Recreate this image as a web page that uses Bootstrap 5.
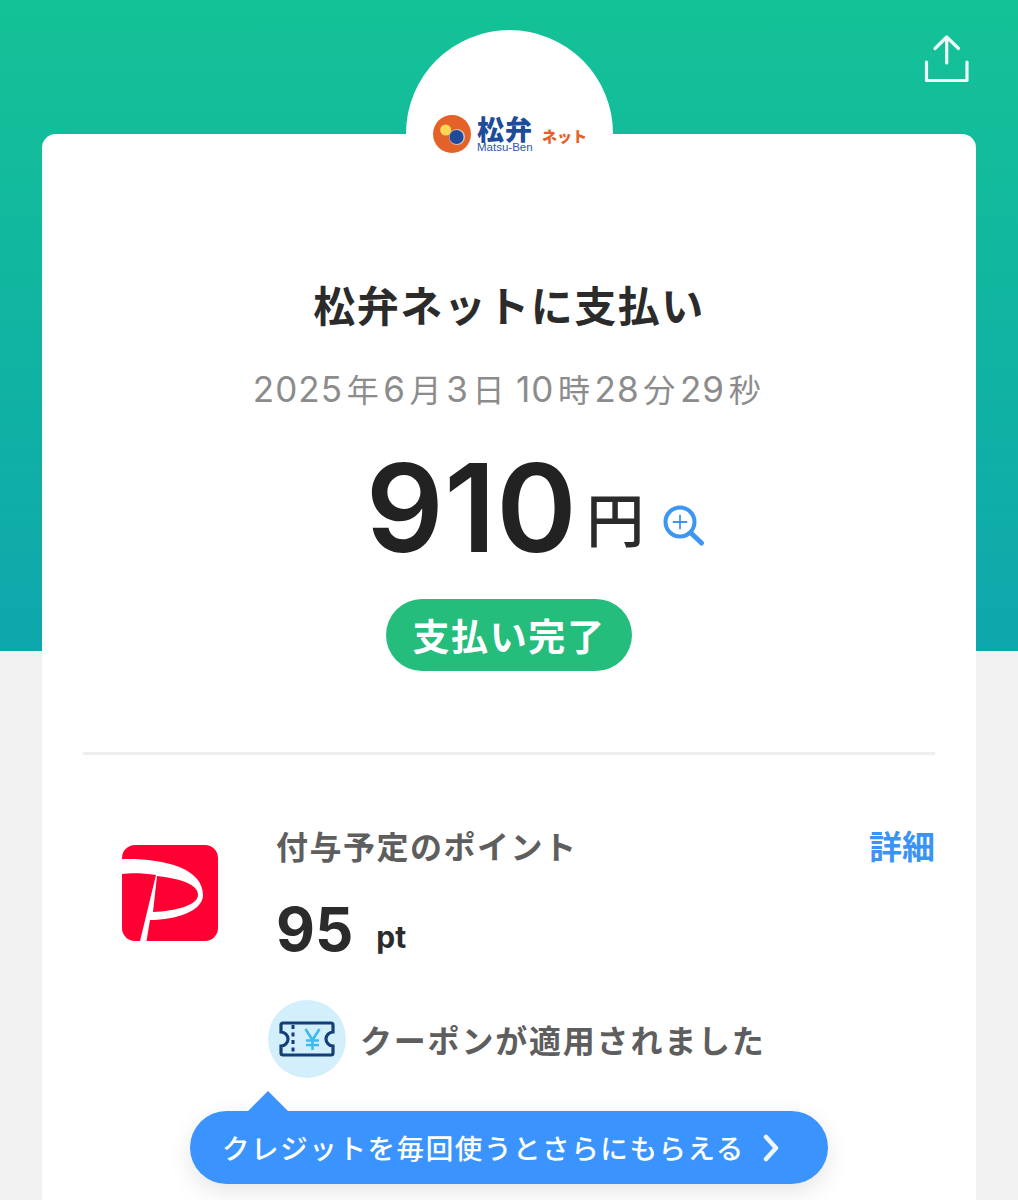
<!DOCTYPE html>
<html lang="ja">
<head>
  <meta charset="UTF-8">
  <meta name="viewport" content="width=device-width, initial-scale=1.0">
  <title>松弁ネットに支払い</title>
  <link href="https://cdn.jsdelivr.net/npm/bootstrap@5.3.0/dist/css/bootstrap.min.css" rel="stylesheet">
  <style>
    html, body { height: 1200px; overflow: hidden; }
    body {
      font-family: Inter, "Noto Sans CJK JP", sans-serif;
      color: #222;
      background: #f2f2f2;
    }
    .pay-screen {
      height: 1200px;
      padding: 134px 42px 0;
      background: linear-gradient(#14c296, #0ea7ad) top / 100% 651px no-repeat;
    }
    .share-btn { top: 33px; right: 47px; width: 48px; height: 52px; }
    .receipt {
      height: 1066px;
      background: #fff;
      border-radius: 14px 14px 0 0;
      padding: 0 41px;
    }
    .logo-dome {
      top: -104px;
      left: 364px;
      width: 207px;
      height: 207px;
      border-radius: 50%;
      background: #fff;
      z-index: 0;
    }
    .logo-wrap { top: -19px; left: 391px; z-index: 1; line-height: 1; }
    .logo-kanji { font: 900 27px/27px "Noto Sans CJK JP", sans-serif; color: #1d4c9b; letter-spacing: 1px; }
    .logo-latin { font: 400 11.500px/11px "Liberation Sans", sans-serif; color: #2a58a5; }
    .logo-brand { margin-left: 6px; }
    .logo-net { font: 800 15px/15px "Noto Sans CJK JP", sans-serif; color: #e4622a; margin: 3px 0 0 9px; }
    .pay-title {
      padding-top: 141px;
      font: 700 42px/58px "Noto Sans CJK JP", sans-serif;
      letter-spacing: 1.5px;
      color: #2b2b2b;
      margin: 0;
    }
    .pay-date {
      margin-top: 30px;
      font-size: 35px;
      line-height: 50px;
      letter-spacing: 1.1px;
      word-spacing: -4px;
      color: #8c8c8c;
      white-space: nowrap;
    }
    .pay-date span { font-family: "Noto Sans CJK JP", sans-serif; font-size: 32px; margin: 0 3.500px; }
    .amount-row { margin-top: 30px; height: 135px; padding-left: 53px; }
    .amount-num { font: 600 122px/127px Inter, "Liberation Sans", sans-serif; letter-spacing: 0.500px; color: #222; }
    .amount-yen { font: 500 58px/58px "Noto Sans CJK JP", sans-serif; margin: 44px 0 0 9px; color: #2b2b2b; }
    .zoom-icon { width: 42px; height: 42px; margin: 61px 0 0 19px; }
    .status-pill {
      width: 246px;
      height: 72px;
      margin-top: 20px;
      border-radius: 36px;
      background: #24bd7c;
      color: #fff;
      font: 700 37px/72px "Noto Sans CJK JP", sans-serif;
      letter-spacing: 1.6px;
    }
    .rule-line { height: 3px; background: #eeeeee; margin: 81px 0 0; }
    .point-row { padding-top: 66px; }
    .paypay-mark { width: 98px; height: 98px; margin: 24px 0 0 38px; flex: none; }
    .point-body { margin-left: 57px; padding-top: 1px; }
    .point-label { font: 700 32px/46px "Noto Sans CJK JP", sans-serif; color: #5e5e5e; letter-spacing: 1.5px; }
    .detail-link { font: 700 33px/46px "Noto Sans CJK JP", sans-serif; color: #3b94f5; text-decoration: none; }
    .point-value { font: 700 60px/70px Inter, sans-serif; color: #2b2b2b; margin-top: 26px; }
    .point-unit { font: 700 30px/70px Inter, sans-serif; margin-left: 23px; padding-top: 8px; }
    .coupon-row { margin: 28px 0 0 -8px; }
    .coupon-badge { width: 78px; height: 78px; border-radius: 50%; background: #d3effb; flex: none; }
    .coupon-text { font: 700 32px/46px "Noto Sans CJK JP", sans-serif; color: #5e5e5e; margin-left: 14px; letter-spacing: 1.800px; }
    .credit-tip {
      left: 190px;
      top: 1111px;
      width: 638px;
      height: 73px;
      border-radius: 37px;
      background: #3b94fd;
      color: #fff;
      font: 500 27.500px/73px "Noto Sans CJK JP", sans-serif;
      letter-spacing: 1.600px;
      padding: 0 0 0 32px;
      text-decoration: none;
      box-shadow: 0 8px 24px rgba(0, 0, 0, .1);
    }
    .credit-tip::before {
      content: "";
      position: absolute;
      left: 57px;
      top: -20px;
      border-left: 21px solid transparent;
      border-right: 21px solid transparent;
      border-bottom: 21px solid #3b94fd;
    }
  </style>
</head>
<body>
  <div class="pay-screen position-relative">
    <!-- share -->
    <a class="share-btn position-absolute" href="#" aria-label="共有">
      <svg viewBox="0 0 48 52" width="48" height="52" fill="none" stroke="#eefbf8" stroke-width="3.200" stroke-linecap="round" stroke-linejoin="round">
        <path d="M3.500 29V47.500H44V29"/>
        <path d="M23.700 30V4M12 15.500 23.700 4 35.500 15.500"/>
      </svg>
    </a>

    <div class="receipt position-relative">
      <div class="logo-dome position-absolute"></div>
      <div class="logo-wrap position-absolute d-flex align-items-center">
        <svg width="38" height="38" viewBox="0 0 38 38">
          <circle cx="19" cy="19" r="19" fill="#e4622a"/>
          <circle cx="12.700" cy="15" r="5.500" fill="#fdd854"/>
          <circle cx="24" cy="22" r="8" fill="#c9c3bb"/>
          <circle cx="23.500" cy="22" r="7" fill="#1f4a9c"/>
        </svg>
        <div class="logo-brand">
          <div class="logo-kanji">松弁</div>
          <div class="logo-latin">Matsu-Ben</div>
        </div>
        <div class="logo-net">ネット</div>
      </div>

      <div class="position-relative text-center">
        <h1 class="pay-title">松弁ネットに支払い</h1>
        <div class="pay-date">2025<span>年</span>6<span>月</span>3<span>日</span> 10<span>時</span>28<span>分</span>29<span>秒</span></div>
        <div class="amount-row d-flex justify-content-center">
          <div class="amount-num">910</div>
          <div class="amount-yen">円</div>
          <svg class="zoom-icon" viewBox="0 0 42 42" fill="none" stroke="#3d96f2" stroke-linecap="round">
            <circle cx="17" cy="17" r="14.500" stroke-width="4"/>
            <path d="M28 28 38.500 38" stroke-width="5"/>
            <path d="M17 10.500V23.500M10.500 17H23.500" stroke-width="1.800"/>
          </svg>
        </div>
        <div class="status-pill mx-auto">支払い完了</div>
      </div>

      <div class="rule-line"></div>

      <div class="point-row d-flex">
        <svg class="paypay-mark" viewBox="0 0 98 98">
          <rect x="1" width="96" height="96" rx="13" fill="#ff0033"/>
          <path d="M1 14C40 13 82 22 82 50C82 66 55 75 29 75L25.500 96H19L35 30C22 28 10 28 1 29Z" fill="#fff"/>
          <path d="M36 31C55 33 77 38 77 50C77 60 55 66 32 67Z" fill="#ff0033"/>
        </svg>
        <div class="point-body flex-grow-1">
          <div class="d-flex justify-content-between">
            <div class="point-label">付与予定のポイント</div>
            <a class="detail-link" href="#">詳細</a>
          </div>
          <div class="point-value d-flex">95<span class="point-unit">pt</span></div>
          <div class="coupon-row d-flex align-items-center">
            <div class="coupon-badge d-flex align-items-center justify-content-center">
              <svg width="56" height="36" viewBox="0 0 56 36" fill="none">
                <path d="M4 2H52A2 2 0 0 1 54 4V11A7 7 0 0 0 54 25V32A2 2 0 0 1 52 34H4A2 2 0 0 1 2 32V25A7 7 0 0 0 2 11V4A2 2 0 0 1 4 2Z" stroke="#123e7a" stroke-width="3.200"/>
                <path d="M14 4V33" stroke="#123e7a" stroke-width="3" stroke-dasharray="4 3.500"/>
                <path d="M26.500 8 33.500 19 40.500 8M33.500 19V29M27 19.500H40M27 24H40" stroke="#3bbcf0" stroke-width="2.600"/>
              </svg>
            </div>
            <div class="coupon-text">クーポンが適用されました</div>
          </div>
        </div>
      </div>
    </div>

    <a class="credit-tip position-absolute d-flex" href="#">
      クレジットを毎回使うとさらにもらえる
      <svg class="ms-3 align-self-center" width="20" height="28" viewBox="0 0 20 28" fill="none" stroke="#eef6ff" stroke-width="4.500" stroke-linecap="round" stroke-linejoin="round">
        <path d="M5 3 15 14 5 25"/>
      </svg>
    </a>
  </div>

  <script src="https://cdn.jsdelivr.net/npm/bootstrap@5.3.0/dist/js/bootstrap.bundle.min.js"></script>
</body>
</html>
